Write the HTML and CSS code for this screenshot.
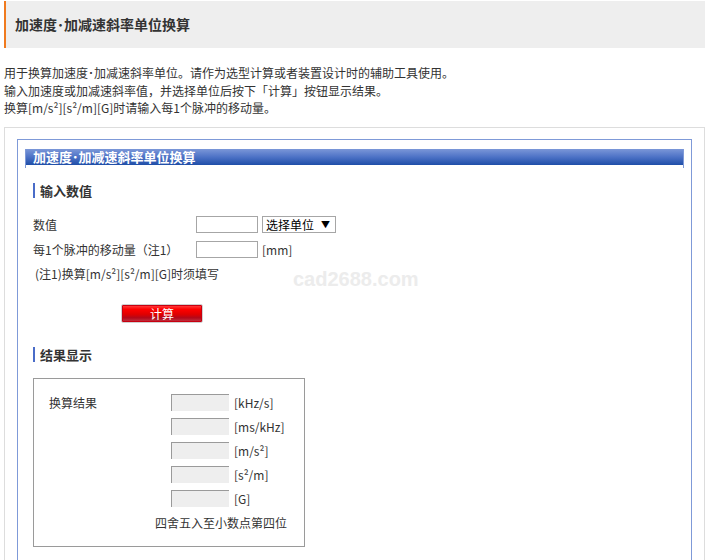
FILE: index.html
```html
<!DOCTYPE html>
<html lang="zh-CN">
<head>
    <meta charset="UTF-8">
    <meta name="viewport" content="width=device-width, initial-scale=1.0">
    <title>加速度･加减速斜率单位换算</title>
    <link rel="stylesheet" href="styles.css">
</head>
<body>
    <h1 class="page-title">加速度･加减速斜率单位换算</h1>

    <div class="intro">
        <p>用于换算加速度･加减速斜率单位。请作为选型计算或者装置设计时的辅助工具使用。</p>
        <p>输入加速度或加减速斜率值，并选择单位后按下「计算」按钮显示结果。</p>
        <p>换算[m/s²][s²/m][G]时请输入每1个脉冲的移动量。</p>
    </div>

    <div class="outer">
        <div class="panel">
            <div class="panel-head">
                <div class="panel-bar">加速度･加减速斜率单位换算</div>
            </div>

            <div class="watermark">cad2688.com</div>

            <h2 class="section">输入数值</h2>

            <div class="form-row first">
                <span class="label">数值</span>
                <input type="text" class="field">
                <span class="select-wrap">
                    <select class="unit-select">
                        <option>选择单位</option>
                    </select>
                </span>
            </div>
            <div class="form-row">
                <span class="label">每1个脉冲的移动量（注1）</span>
                <input type="text" class="field">
                <span class="unit">[mm]</span>
            </div>
            <p class="note">(注1)换算[m/s²][s²/m][G]时须填写</p>

            <button class="calc-btn" type="button">计算</button>

            <h2 class="section second">结果显示</h2>

            <div class="result-box">
                <div class="result-grid">
                    <span class="label">换算结果</span>
                    <input type="text" class="out" disabled>
                    <span class="unit">[kHz/s]</span>

                    <span></span>
                    <input type="text" class="out" disabled>
                    <span class="unit">[ms/kHz]</span>

                    <span></span>
                    <input type="text" class="out" disabled>
                    <span class="unit">[m/s²]</span>

                    <span></span>
                    <input type="text" class="out" disabled>
                    <span class="unit">[s²/m]</span>

                    <span></span>
                    <input type="text" class="out" disabled>
                    <span class="unit">[G]</span>
                </div>
                <p class="round-note">四舍五入至小数点第四位</p>
            </div>
        </div>
    </div>
</body>
</html>
```

FILE: styles.css
```css
body {
    margin: 0;
    padding: 1px 5px 0 4px;
    font-family: "Noto Sans CJK SC", "DejaVu Sans", sans-serif;
    font-size: 12px;
    color: #333;
    background-color: #fff;
}

p {
    margin: 0;
}

.page-title {
    margin: 0;
    height: 47px;
    line-height: 47px;
    padding-left: 9px;
    font-size: 14px;
    font-weight: bold;
    color: #333;
    background-color: #eee;
    border-left: 2px solid #f07a1e;
}

.intro {
    margin-top: 16px;
    line-height: 17.5px;
}

.outer {
    margin-top: 10px;
    border: 1px solid #ddd;
    border-bottom: none;
    padding: 11px 12px 0 12px;
    height: 440px;
}

.panel {
    position: relative;
    border: 1px solid #7f9ad8;
    border-bottom: none;
    padding: 9px 7px 20px 7px;
    height: 400px;
}

.panel-head {
    height: 19px;
    border-left: 1px solid #7f9ad8;
    border-right: 1px solid #7f9ad8;
}

.panel-bar {
    height: 16px;
    line-height: 16px;
    padding-left: 7px;
    color: #fff;
    font-size: 13px;
    font-weight: bold;
    background: linear-gradient(#7b97d8, #4d72c6 50%, #1f4ea8);
}

.watermark {
    position: absolute;
    left: 275px;
    top: 128px;
    font-family: "Liberation Sans", Arial, sans-serif;
    font-size: 20px;
    font-weight: bold;
    color: #ececec;
}

.section {
    margin: 15px 0 0 8px;
    height: 15px;
    line-height: 15px;
    padding-left: 5px;
    border-left: 2px solid #4a6cc8;
    font-size: 13px;
    font-weight: bold;
    color: #333;
}

.section.second {
    margin-top: 24px;
}

.form-row {
    display: flex;
    align-items: center;
    margin: 8px 0 0 8px;
    height: 17px;
}

.form-row.first {
    margin-top: 18px;
}

.form-row .label {
    width: 163px;
}

.field {
    box-sizing: border-box;
    width: 62px;
    height: 17px;
    margin: 0 4px 0 0;
    padding: 0 2px;
    border: 1px solid #a6a6a6;
    font-size: 12px;
}

.select-wrap {
    position: relative;
    display: inline-block;
}

.select-wrap::after {
    content: "▼";
    position: absolute;
    right: 6px;
    top: 1px;
    font-size: 9px;
    line-height: 15px;
    color: #000;
    pointer-events: none;
}

.unit-select {
    appearance: none;
    -webkit-appearance: none;
    box-sizing: border-box;
    width: 74px;
    height: 17px;
    padding: 0 0 0 3px;
    border: 1px solid #a6a6a6;
    border-radius: 0;
    background: #fff;
    font-family: inherit;
    font-size: 12px;
    line-height: 15px;
    color: #000;
}

.unit {
    color: #333;
}

.note {
    margin: 8px 0 0 10px;
    line-height: 16px;
}

.calc-btn {
    display: block;
    box-sizing: border-box;
    margin: 22px 0 0 96px;
    width: 82px;
    height: 19px;
    padding: 0;
    border: 1px solid #d0d0d0;
    border-radius: 2px;
    color: #fff;
    font-family: inherit;
    font-size: 12px;
    line-height: 15px;
    background: linear-gradient(#ff4a4a 0%, #ff0000 25%, #e00000 55%, #b3081a 75%, #c23a46 100%);
    box-shadow: inset 0 0 0 1px #c80010;
    cursor: pointer;
}

.result-box {
    margin: 16px 0 0 8px;
    width: 255px;
    border: 1px solid #9a9a9a;
    padding: 15px 0 15px 15px;
}

.result-grid {
    display: grid;
    grid-template-columns: 122px 63px auto;
    row-gap: 7px;
    align-items: center;
}

.out {
    box-sizing: border-box;
    width: 58px;
    height: 17px;
    margin: 0;
    border: none;
    border-top: 1px solid #9a9a9a;
    border-left: 1px solid #9a9a9a;
    background-color: #eee;
}

.round-note {
    margin: 8px 0 0 106px;
    line-height: 16px;
}
```
